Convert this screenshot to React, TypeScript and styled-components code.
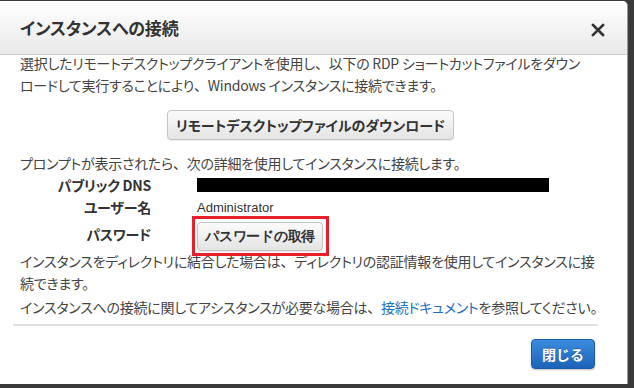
import styled, { createGlobalStyle } from "styled-components";

const GlobalStyle = createGlobalStyle`
  html, body {
    margin: 0;
    padding: 0;
    background-color: #3a3a3a;
  }
  body {
    font-family: "Noto Sans CJK JP", "Liberation Sans", sans-serif;
    font-feature-settings: "palt";
  }
`;

const Page = styled.div`
  width: 634px;
  height: 388px;
  padding-top: 1px;
  box-sizing: border-box;
  overflow: hidden;
`;

const Dialog = styled.div`
  width: 628px;
  height: 383px;
  background-color: #fff;
  border-radius: 0 5px 0 0;
  border-right: 1px solid #9a9a9a;
  box-sizing: border-box;
  display: flex;
  flex-direction: column;
`;

const Header = styled.div`
  height: 54px;
  box-sizing: border-box;
  display: flex;
  align-items: center;
  justify-content: space-between;
  padding: 0 22px 0 20px;
  background: linear-gradient(#ffffff, #e9e9e9);
  border-bottom: 1px solid #cfcfcf;
  border-radius: 0 5px 0 0;
`;

const Title = styled.h1`
  margin: 0;
  font-size: 17px;
  font-weight: 700;
  letter-spacing: -0.2px;
  color: #333;
`;

const CloseX = styled.button`
  border: 0;
  background: none;
  padding: 0;
  width: 14px;
  height: 14px;
  display: flex;
  margin-top: 4px;
  cursor: pointer;
`;

const Body = styled.div`
  padding: 0 20px;
  font-size: 14px;
  line-height: 22px;
  letter-spacing: -0.25px;
  color: #444;
`;

const Text = styled.p<{ $gap?: number }>`
  margin: ${(p) => p.$gap ?? 0}px 0 0;
  white-space: nowrap;
`;

/* full-width comma keeps its space even with palt on */
const Comma = styled.span`
  font-feature-settings: normal;
`;

const Center = styled.div`
  display: flex;
  justify-content: center;
  padding-right: 6px;
  margin: 14px 0 12px;
`;

const GrayButton = styled.button`
  font-family: inherit;
  font-feature-settings: "palt";
  font-size: 14px;
  font-weight: 700;
  color: #333;
  height: 30px;
  padding: 0 8px;
  border: 1px solid #c4c4c4;
  border-radius: 4px;
  background: linear-gradient(#fbfbfb, #e4e4e4);
  box-shadow: 0 1px 1px rgba(0, 0, 0, 0.08);
  cursor: pointer;
`;

const Details = styled.div`
  display: grid;
  grid-template-columns: 131px 1fr;
  column-gap: 46px;
  align-items: center;
`;

const Label = styled.div<{ $height: number }>`
  text-align: right;
  font-weight: 700;
  color: #333;
  height: ${(p) => p.$height}px;
  line-height: ${(p) => p.$height}px;
`;

const Value = styled.div<{ $height: number }>`
  height: ${(p) => p.$height}px;
  display: flex;
  align-items: center;
  font-family: "Liberation Sans", sans-serif;
  font-size: 13px;
  letter-spacing: 0;
  color: #333;
`;

const Redacted = styled.div`
  width: 352px;
  height: 14px;
  background-color: #000;
`;

const Marked = styled.div`
  position: relative;
  display: inline-flex;
  align-self: flex-start;
  margin-top: 3px;

  &::after {
    content: "";
    position: absolute;
    left: -5px;
    top: -6px;
    right: -6px;
    bottom: -5px;
    border: 3px solid #e8202a;
    pointer-events: none;
  }
`;

const SmallButton = styled(GrayButton)`
  height: 29px;
  padding: 0 7px;
  letter-spacing: -0.25px;
`;

const Link = styled.a`
  color: #1f6fbf;
  text-decoration: none;
`;

const Divider = styled.hr`
  margin: 6px 0 0 13px;
  width: 585px;
  border: 0;
  border-top: 2px solid #e0e0e0;
`;

const Footer = styled.div`
  display: flex;
  justify-content: flex-end;
  padding: 13px 32px 0 0;
`;

const PrimaryButton = styled.button`
  font-family: inherit;
  font-size: 14px;
  font-weight: 700;
  color: #fff;
  width: 64px;
  height: 30px;
  border: 1px solid #1a5aa6;
  border-radius: 4px;
  background: linear-gradient(#3b8ce0, #1c63b8);
  box-shadow: 0 1px 2px rgba(0, 0, 0, 0.25);
  text-shadow: 0 -1px 0 rgba(0, 0, 0, 0.25);
  cursor: pointer;
`;

export default function App() {
  return (
    <Page>
      <GlobalStyle />
      <Dialog>
        <Header>
          <Title>インスタンスへの接続</Title>
          <CloseX aria-label="閉じる">
            <svg width="14" height="14" viewBox="0 0 14 14">
              <path d="M2 2 L12 12 M12 2 L2 12" stroke="#333" strokeWidth="2.6" strokeLinecap="square" />
            </svg>
          </CloseX>
        </Header>
        <Body>
          <Text $gap={-3}>
            選択したリモートデスクトップクライアントを使用し<Comma>、</Comma>以下の RDP ショートカットファイルをダウン
          </Text>
          <Text>
            ロードして実行することにより<Comma>、</Comma>Windows インスタンスに接続できます。
          </Text>
          <Center>
            <GrayButton>リモートデスクトップファイルのダウンロード</GrayButton>
          </Center>
          <Text>
            プロンプトが表示されたら<Comma>、</Comma>次の詳細を使用してインスタンスに接続します。
          </Text>
          <Details>
            <Label $height={22}>パブリック DNS</Label>
            <Value $height={22}>
              <Redacted />
            </Value>
            <Label $height={23}>ユーザー名</Label>
            <Value $height={23}>Administrator</Value>
            <Label $height={31}>パスワード</Label>
            <Value $height={31}>
              <Marked>
                <SmallButton>パスワードの取得</SmallButton>
              </Marked>
            </Value>
          </Details>
          <Text>
            インスタンスをディレクトリに結合した場合は<Comma>、</Comma>ディレクトリの認証情報を使用してインスタンスに接
          </Text>
          <Text>続できます。</Text>
          <Text $gap={2}>
            インスタンスへの接続に関してアシスタンスが必要な場合は<Comma>、</Comma>
            <Link href="#">接続ドキュメント</Link>を参照してください。
          </Text>
        </Body>
        <Divider />
        <Footer>
          <PrimaryButton>閉じる</PrimaryButton>
        </Footer>
      </Dialog>
    </Page>
  );
}
